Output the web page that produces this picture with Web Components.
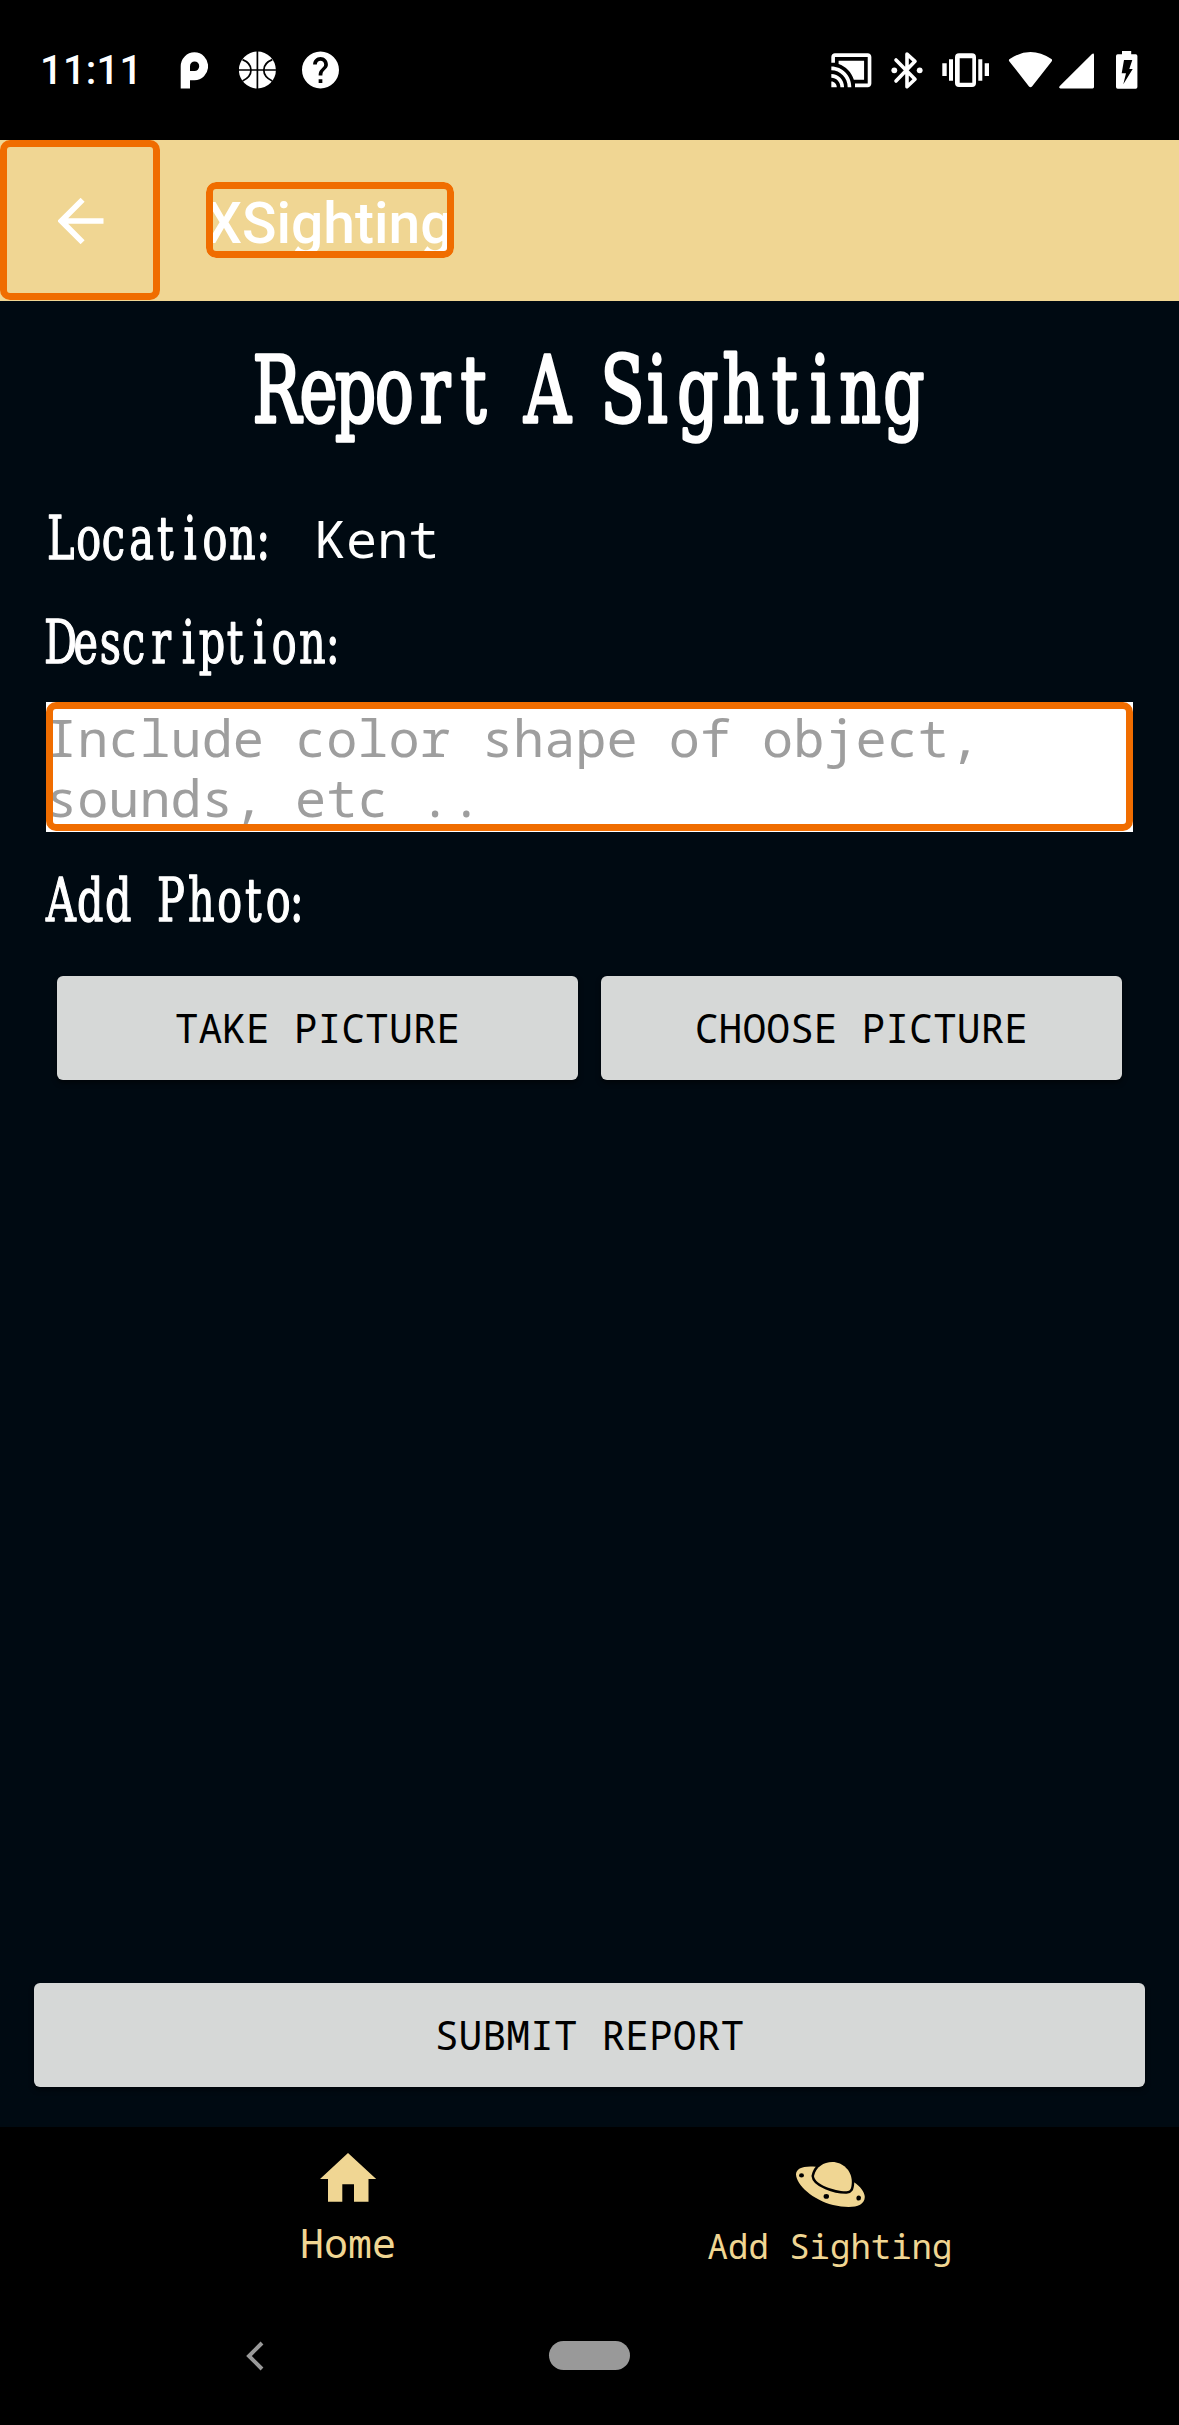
<!DOCTYPE html>
<html lang="en">
<head>
<meta charset="utf-8">
<title>XSighting</title>
<style>
  html, body { margin: 0; background: #000; }
  body { width: 1179px; height: 2425px; overflow: hidden; }
</style>
</head>
<body>
<sighting-app></sighting-app>
<script>
const MONO = '"Droid Sans Mono","Noto Sans Mono","DejaVu Sans Mono",monospace';

const define = (name, render) => customElements.define(name, class extends HTMLElement {
  connectedCallback() {
    if (this.shadowRoot) return;
    const t = document.createElement('template');
    t.innerHTML = render(this);
    this.attachShadow({ mode: 'open' }).append(t.content.cloneNode(true));
  }
});

const ICONS = {
  pandora: [28, 40, '<path fill="#fff" fill-rule="evenodd" d="M.7 38.4V16.3A13.7 14 0 1 1 14.3 30.3H10V38.4ZM10 21V16.2A4.6 4.8 0 1 1 14.5 21Z"/>'],
  ball: [37, 40, '<circle cx="18.4" cy="20" r="18.5" fill="#fff"/><path d="M18.4 0V40M0 20H37M3.5 9.6Q12 13 12 20T3.5 31M33.3 9.6Q24.800 13 24.800 20T33.300 31" fill="none" stroke="#000" stroke-width="1.7"/>'],
  help: [37, 40, '<path transform="translate(-3.7 -2.2) scale(1.85)" fill="#fff" d="M12 2C6.480 2 2 6.480 2 12s4.480 10 10 10 10-4.480 10-10S17.520 2 12 2zm1 17h-2v-2h2v2zm2.070-7.750l-.9.920C13.450 12.900 13 13.500 13 15h-2v-.5c0-1.100.450-2.100 1.170-2.830l1.240-1.260c.370-.360.590-.860.590-1.410 0-1.100-.9-2-2-2s-2 .9-2 2H8c0-2.210 1.790-4 4-4s4 1.790 4 4c0 .880-.360 1.680-.930 2.250z"/>'],
  cast: [41, 40, '<path transform="translate(-1.5 -2.3) scale(1.82 1.88)" fill="#fff" d="M1 18v3h3c0-1.660-1.340-3-3-3zm0-4v2c2.760 0 5 2.240 5 5h2c0-3.870-3.130-7-7-7zm18-7H5v1.630c3.960 1.280 7.090 4.410 8.370 8.370H19V7zM1 10v2c4.970 0 9 4.030 9 9h2c0-6.080-4.930-11-11-11zm20-7H3c-1.100 0-2 .9-2 2v3h2V5h18v14h-7v2h7c1.100 0 2-.9 2-2V5c0-1.100-.9-2-2-2z"/>'],
  bluetooth: [32, 40, '<path d="M5 10 24 29.300 16 36.700V4L24 11.300 5 31" fill="none" stroke="#fff" stroke-width="3.6" stroke-linejoin="round" stroke-linecap="round"/><circle cx="3.300" cy="20.300" r="2.900" fill="#fff"/><circle cx="28.700" cy="20.300" r="2.900" fill="#fff"/>'],
  vibrate: [47, 40, '<path fill="#fff" fill-rule="evenodd" d="M17 3.300H30a4 4 0 0 1 4 4V33a4 4 0 0 1-4 4H17a4 4 0 0 1-4-4V7.300a4 4 0 0 1 4-4ZM17.700 8.300V32.700H30.300V8.300ZM.3 13.300H4.700V26H.3ZM7 9.300H11V30.700H7ZM36.300 9.300H40.300V30.700H36.300ZM42.700 13.300H47V26H42.700Z"/>'],
  wifi: [45, 40, '<path fill="#fff" d="M1.400 11.400Q.2 10 1.700 9Q22.500-5 43.400 9Q44.700 10 43.600 11.400L24 36.400Q22.500 38 21 36.400Z"/>'],
  signal: [35, 40, '<path fill="#fff" d="M1.500 38.400Q-.8 38 .8 36L33 4Q35 2.800 35 5V37Q35 38.400 33.600 38.400Z"/>'],
  battery: [22, 40, '<path fill="#fff" fill-rule="evenodd" d="M6 1H15.200V4.300H19.700Q21.400 4.300 21.400 6V37Q21.400 38.700 19.700 38.700H1.700Q0 38.700 0 37V6Q0 4.300 1.700 4.300H6ZM8 10 5.700 23.300H10L7.300 34.300 16.700 19H13.300L16.300 10Z"/>'],
  arrow: [46, 46, '<path d="M24.600 1.800 3.400 23 24.600 44.200M3.400 23H45.500" fill="none" stroke="#fff" stroke-width="5.7"/>'],
  home: [57, 50, '<path fill="#f0d693" d="M28 0 56.200 26H48.500V48.700H34V31.300H22.300V48.700H8V26H0Z"/>'],
  ufo: [71, 48, '<path fill="#f0d693" d="M20.700 6.700C8 5.500 1 8.500 1 14.500C1.500 25 18 40 38 45C54 48.600 69.500 48 69.800 37C69.800 32 65 26 59 22.200L40 15Z"/><path fill="#f0d693" stroke="#000" stroke-width="5" paint-order="stroke" d="M19 16C21 7 28.500 2 37.300 2C48 2 57 11 56.800 22C56.600 29.500 55 31 51.500 31.200C40 31.500 19.500 24.500 19 16Z"/><ellipse cx="6.500" cy="15.400" rx="2.500" ry="2.100"/><ellipse cx="31.300" cy="36.400" rx="2.700" ry="2.300"/><ellipse cx="63.700" cy="38" rx="2.300" ry="2.600"/>'],
  chevron: [18, 30, '<path d="M16 2 3 15 16 28" fill="none" stroke="#999" stroke-width="4"/>']
};

define('x-icon', el => {
  const [w, h, body] = ICONS[el.getAttribute('name')];
  return `<style>:host{display:block;flex:none;width:${w}px;height:${h}px}svg{display:block}</style>
  <svg width="${w}" height="${h}" viewBox="0 0 ${w} ${h}">${body}</svg>`;
});

define('status-bar', () => `<style>
  :host{display:flex;box-sizing:border-box;height:140px;background:#000;color:#fff;padding:50px 41px 0 40px;align-items:flex-start;font:500 40px/42.600px Roboto,sans-serif}
  .time{width:140px;letter-spacing:.2px}
  .space{flex:1}
</style>
<span class="time">11:11</span>
<x-icon name="pandora"></x-icon><x-icon name="ball" style="margin-left:31px"></x-icon><x-icon name="help" style="margin-left:26px"></x-icon>
<span class="space"></span>
<x-icon name="cast"></x-icon><x-icon name="bluetooth" style="margin-left:19px"></x-icon><x-icon name="vibrate" style="margin-left:19px"></x-icon><x-icon name="wifi" style="margin-left:19px"></x-icon><x-icon name="signal" style="margin-left:6px"></x-icon><x-icon name="battery" style="margin-left:22px"></x-icon>`);

/* Box with an orange outline lying over its content */
define('focus-frame', () => `<style>
  :host{display:block;position:relative;overflow:hidden;box-sizing:border-box}
  :host::after{content:"";position:absolute;inset:0;border:7px solid #f06d00;border-radius:10px}
</style><slot></slot>`);

define('app-bar', () => `<style>
  :host{display:flex;height:160.5px;background:#f0d693;color:#fff}
  .back{width:160px;height:160px}
  .back x-icon{margin:58px 0 0 58px}
  .title{width:248px;height:76px;margin:42px 0 0 46px;font:500 57px/83px Roboto,sans-serif;white-space:nowrap;border-radius:10px}
</style>
<focus-frame class="back"><x-icon name="arrow"></x-icon></focus-frame>
<focus-frame class="title"><slot></slot></focus-frame>`);

/* Condensed typewriter lettering: every glyph is centred on its own carriage stop */
define('type-text', el => {
  const n = k => +el.getAttribute(k);
  const w = n('width'), s = n('size'), h = n('height'), b = n('baseline'), k = n('squeeze');
  const stops = el.getAttribute('stops').split(' ').map(v => (v / k).toFixed(1)).join(' ');
  return `<style>:host{display:block;width:${w}px;height:${h}px;flex:none}svg{display:block;overflow:visible}
  text{font:${s}px "DejaVu Serif",serif;fill:#fff;stroke:#fff;stroke-width:${n('ink')}px;stroke-linejoin:round;text-anchor:middle}</style>
  <svg width="${w}" height="${h}"><text transform="scale(${k} 1)" x="${stops}" y="${b}">${el.getAttribute('text')}</text></svg>`;
});

define('grey-button', () => `<style>
  :host{display:flex;box-sizing:border-box;height:104px;align-items:center;justify-content:center;border-radius:6px;background:#d6d8d7;color:#000;font:39.700px/52px ${MONO};white-space:nowrap;box-shadow:0 3px 5px rgba(0,0,0,.5)}
</style><slot></slot>`);

define('report-form', () => `<style>
  :host{display:flex;flex-direction:column;box-sizing:border-box;height:1826.500px;background:#000a12;padding:29.500px 0 0;color:#fff}
  .heading{align-self:center}
  .fields{display:flex;flex-direction:column;padding:0 46px}
  .row{display:flex;height:104px}
  .value{margin:13px 0 0 45px;font:51.800px/60px ${MONO}}
  .hint{height:129.500px;background:#fff;color:#9e9e9e;font:51.900px/60px ${MONO};margin:-1px 0 .5px}
  .hint focus-frame{height:129px;padding-top:5px}
  .photos{display:flex;gap:23px;padding:0 11px}
  .photos grey-button{flex:1}
  .submit{margin:auto 34px 40px}
</style>
<type-text class="heading" text="Report A Sighting" width="669" height="165" size="92" baseline="92" squeeze=".7" ink="3.4" stops="21.8 63.5 100.7 139.3 180 218.3 255 292.6 330 367.5 402.4 442.8 488.2 529.6 565.4 605.3 649"></type-text>
<div class="fields">
  <div class="row"><type-text text="Location:" width="224" height="104" size="60" baseline="64" squeeze=".69" ink="1.400" stops="14.7 42.7 67.3 95.7 119.3 144 169 196.3 217.3"></type-text><span class="value">Kent</span></div>
  <div class="row"><type-text text="Description:" width="293" height="104" size="60" baseline="64" squeeze=".69" ink="1.400" stops="14.7 39.7 64.3 87.7 115 142.3 166 189 213.7 238.3 266.3 286.7"></type-text></div>
  <div class="hint"><focus-frame>Include color shape of object,<br>sounds, etc ..</focus-frame></div>
  <type-text text="Add Photo:" width="258" height="144" size="60" baseline="89" squeeze=".69" ink="1.400" stops="15 44.4 72.2 98 125 155.4 183.6 207.2 232.2 250.8"></type-text>
  <div class="photos"><grey-button>TAKE PICTURE</grey-button><grey-button>CHOOSE PICTURE</grey-button></div>
</div>
<grey-button class="submit">SUBMIT REPORT</grey-button>`);

define('nav-item', () => `<style>
  :host{display:flex;flex-direction:column;align-items:center;color:#f0d693;white-space:nowrap;font-family:${MONO};line-height:50px}
  .icon{height:var(--icon-height);display:flex;align-items:flex-start}
</style><div class="icon"><slot name="icon"></slot></div><slot></slot>`);

define('bottom-nav', () => `<style>
  :host{display:grid;grid-template-columns:1fr 1fr;box-sizing:border-box;height:173px;background:#000;padding:26px 108px 0 107px}
  .a{font-size:40px;--icon-height:65px}.b{font-size:34px;--icon-height:68px}
</style>
<nav-item class="a"><x-icon slot="icon" name="home"></x-icon>Home</nav-item>
<nav-item class="b"><x-icon slot="icon" name="ufo" style="margin-top:7px"></x-icon>Add Sighting</nav-item>`);

define('system-nav', () => `<style>
  :host{display:flex;box-sizing:border-box;height:125px;background:#000;padding:41px 0 0 246px}
  .pill{width:81px;height:29px;border-radius:15px;background:#999;margin-left:285px}
</style><x-icon name="chevron"></x-icon><div class="pill"></div>`);

define('sighting-app', () => `<style>:host{display:block;width:1179px;height:2425px;background:#000;overflow:hidden}</style>
<status-bar></status-bar><app-bar>XSighting</app-bar><report-form></report-form><bottom-nav></bottom-nav><system-nav></system-nav>`);
</script>
</body>
</html>
